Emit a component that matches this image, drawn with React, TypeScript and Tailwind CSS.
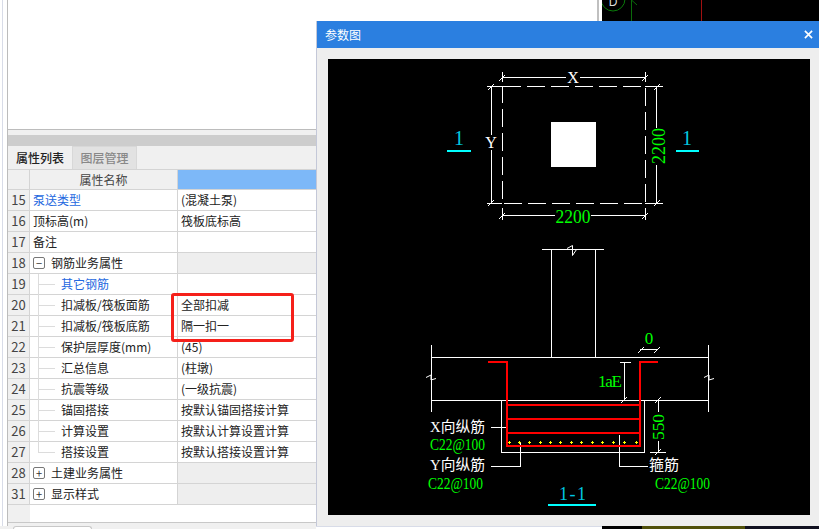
const rows = [
  { n: 15, name: "泵送类型", value: "(混凝土泵)", indent: "top", link: true },
  { n: 16, name: "顶标高(m)", value: "筏板底标高", indent: "top" },
  { n: 17, name: "备注", value: "", indent: "top" },
  { n: 18, name: "钢筋业务属性", value: "", indent: "group", open: true },
  { n: 19, name: "其它钢筋", value: "", indent: "leaf", link: true },
  { n: 20, name: "扣减板/筏板面筋", value: "全部扣减", indent: "leaf" },
  { n: 21, name: "扣减板/筏板底筋", value: "隔一扣一", indent: "leaf" },
  { n: 22, name: "保护层厚度(mm)", value: "(45)", indent: "leaf" },
  { n: 23, name: "汇总信息", value: "(柱墩)", indent: "leaf" },
  { n: 24, name: "抗震等级", value: "(一级抗震)", indent: "leaf" },
  { n: 25, name: "锚固搭接", value: "按默认锚固搭接计算", indent: "leaf" },
  { n: 26, name: "计算设置", value: "按默认计算设置计算", indent: "leaf" },
  { n: 27, name: "搭接设置", value: "按默认搭接设置计算", indent: "leaf", last: true },
  { n: 28, name: "土建业务属性", value: "", indent: "group" },
  { n: 31, name: "显示样式", value: "", indent: "group" },
];

const dots = [509, 519, 529, 540, 550, 560, 571, 581, 592, 602, 613, 624, 636];

function Tick({ x, y }: { x: number; y: number }) {
  return <path d={`M${x - 3} ${y + 3}L${x + 3} ${y - 3}`} stroke="#fff" strokeWidth="1" />;
}

function Cad() {
  const serif = { fontFamily: "'Liberation Serif', serif" };
  const cjk = { fontFamily: "'Liberation Serif', 'Noto Sans CJK SC', serif" };
  return (
    <svg viewBox="328 59 482 456" className="block h-full w-full" shapeRendering="crispEdges">
      {/* plan view */}
      <g stroke="#fff" fill="none">
        <path d="M502.5 86.5H645.5V203.5H502.5Z" strokeDasharray="18 6" />
        <path d="M502.5 72V82M645.5 72V82M502.5 77.5H566M580 77.5H645.5" />
        <path d="M487 86.5H502M487 203.5H502M491.5 86.5V135M491.5 150V203.5" />
        <path d="M645 86.5H663M645 203.5H663M656.5 86.5V128M656.5 165V203.5" />
        <path d="M502.5 208V220M645.5 208V220M502.5 215.5H555M591 215.5H645.5" />
      </g>
      <g shapeRendering="auto">
        <Tick x={502} y={78} />
        <Tick x={645} y={78} />
        <Tick x={491} y={87} />
        <Tick x={491} y={203} />
        <Tick x={657} y={87} />
        <Tick x={657} y={203} />
        <Tick x={502} y={216} />
        <Tick x={645} y={216} />
      </g>
      <rect x="551" y="122" width="45" height="45" fill="#fff" />
      <text x="573" y="83" textAnchor="middle" fontSize="16" fill="#fff" style={serif}>X</text>
      <text x="491" y="148" textAnchor="middle" fontSize="16" fill="#fff" style={serif}>Y</text>
      <text x="573" y="223" textAnchor="middle" fontSize="19" fill="#00ff00" style={serif} textLength={35} lengthAdjust="spacingAndGlyphs">2200</text>
      <text transform="translate(665 146) rotate(-90)" textAnchor="middle" fontSize="19" fill="#00ff00" style={serif} textLength={36} lengthAdjust="spacingAndGlyphs">2200</text>
      <text x="459" y="145" textAnchor="middle" fontSize="20" fill="#00c8e0" style={serif}>1</text>
      <text x="687" y="145" textAnchor="middle" fontSize="20" fill="#00c8e0" style={serif}>1</text>
      <path d="M447 150.5H471M676 150.5H699" stroke="#00ffff" strokeWidth="2" />

      {/* section view */}
      <g stroke="#fff" fill="none">
        <path d="M542 249.5H604M551.5 249.5V357M595.5 249.5V357" />
        <path d="M431.5 345V412M708.5 345V412M431.5 357.5H708.5M431.5 400.5H708.5" />
        <path d="M501.5 400.5V452.5H644.5V400.5" />
        <path d="M624.5 362V400M620 362.5H631" />
        <path d="M640 349.5H658M658.5 400V412M658.5 441V452M650 452.5H666" />
        <path d="M491 427.5H507M491 466.5H520.5V442M619.5 435V466.5H648" />
      </g>
      <g shapeRendering="auto">
        <Tick x={641} y={350} />
        <Tick x={657} y={350} />
        <Tick x={624} y={400} />
        <Tick x={658} y={400} />
        <Tick x={658} y={452} />
        <path d="M567 248.5L572.5 245.5V255.5L576.5 249.5M426 377.5L431 375V380L436 378.5M704 377.5L709 375V380L714 378.5" stroke="#fff" fill="none" />
      </g>
      <g stroke="#ff0000" strokeWidth="2" fill="none">
        <path d="M488 362H507V446H640V362H658" />
        <path d="M507 405H640M507 419H640M507 433H640" />
      </g>
      {dots.map((x) => (
        <path key={x} d={`M${x - 1.5} 442.5H${x + 1.5}M${x} 441V444`} stroke="#ffff00" />
      ))}
      <text x="649" y="344" textAnchor="middle" fontSize="17" fill="#00ff00" style={serif}>0</text>
      <text x="598" y="387" fontSize="17" fill="#00ff00" style={serif} textLength={24} lengthAdjust="spacing">1aE</text>
      <text transform="translate(664 427) rotate(-90)" textAnchor="middle" fontSize="17" fill="#00ff00" style={serif} textLength={26} lengthAdjust="spacingAndGlyphs">550</text>
      <text x="430" y="432" fontSize="15" fill="#fff" style={cjk} textLength={55} lengthAdjust="spacingAndGlyphs">X向纵筋</text>
      <text x="430" y="450" fontSize="16" fill="#00ff00" style={serif} textLength={55} lengthAdjust="spacingAndGlyphs">C22@100</text>
      <text x="430" y="470" fontSize="15" fill="#fff" style={cjk} textLength={55} lengthAdjust="spacingAndGlyphs">Y向纵筋</text>
      <text x="649" y="470" fontSize="15" fill="#fff" style={cjk}>箍筋</text>
      <text x="428" y="489" fontSize="16" fill="#00ff00" style={serif} textLength={55} lengthAdjust="spacingAndGlyphs">C22@100</text>
      <text x="655" y="489" fontSize="16" fill="#00ff00" style={serif} textLength={55} lengthAdjust="spacingAndGlyphs">C22@100</text>
      <text x="559" y="500" fontSize="18" fill="#00c8e0" style={serif} textLength={27} lengthAdjust="spacing">1-1</text>
      <path d="M548 505H596" stroke="#00ffff" strokeWidth="2" />
    </svg>
  );
}

function PropertyRow({ row }: { row: (typeof rows)[number] }) {
  const isGroup = row.indent === "group";
  return (
    <div className="flex h-[21px] border-b border-[#d4d4d4]">
      <div className="flex w-[22px] shrink-0 items-center justify-center border-r border-[#d4d4d4] bg-[#f0f0f0] text-[13px] text-[#444]">
        {row.n}
      </div>
      <div className="relative flex w-[148px] shrink-0 items-center border-r border-[#d4d4d4]">
        {row.indent === "leaf" && (
          <>
            <span className={`absolute left-[8px] top-0 w-px bg-[#dcdcdc] ${row.last ? "h-[10px]" : "h-[21px]"}`} />
            <span className="absolute left-[8px] top-[10px] h-px w-[17px] bg-[#dcdcdc]" />
          </>
        )}
        {isGroup && (
          <span className="ml-[3px] mr-[6px] flex h-[12px] w-[12px] items-center justify-center rounded-[2px] border border-[#777] text-[11px] leading-none text-[#333]">
            {row.open ? "−" : "+"}
          </span>
        )}
        <span
          className={`${row.indent === "leaf" ? "ml-[31px]" : row.indent === "top" ? "ml-[3px]" : ""} ${
            row.link ? "text-[#2468e0]" : "text-[#222]"
          }`}
        >
          {row.name}
        </span>
      </div>
      <div className={`flex flex-1 items-center pl-[3px] text-[#222] ${isGroup ? "bg-[#eeeeee]" : ""}`}>{row.value}</div>
    </div>
  );
}

export default function App() {
  return (
    <div className="relative h-[529px] w-[819px] overflow-hidden bg-white font-['Noto_Sans_CJK_SC',sans-serif] text-[12px]">
      {/* left property panel */}
      <div className="ml-[2px] flex h-[526px] w-[328px] flex-col border-l border-l-[#d8dce8] pl-[4px]">
        <div className="flex h-full flex-col border-l border-l-[#bcbcbc]">
          <div className="h-[130px] shrink-0 border-b border-[#bcbcbc] bg-white" />
          <div className="h-[5px] shrink-0 bg-[#f0f0f0]" />
          <div className="h-[11px] shrink-0 bg-[#cdcdcd]" />
          <div className="flex h-[23px] shrink-0 bg-[#f0f0f0]">
            <div className="flex w-[64px] items-center justify-center font-medium text-[#222]">属性列表</div>
            <div className="flex w-[65px] items-center justify-center border-x border-t border-[#d8d8d8] bg-[#e2e2e2] font-medium text-[#888]">
              图层管理
            </div>
          </div>
          <div className="flex h-[21px] shrink-0 border-y border-[#d4d4d4]">
            <div className="w-[22px] border-r border-[#d4d4d4] bg-[#f0f0f0]" />
            <div className="flex w-[148px] items-center justify-center border-r border-[#d4d4d4] bg-[#f0f0f0] text-[#444]">
              属性名称
            </div>
            <div className="flex-1 bg-[#7db8f8]" />
          </div>
          {rows.map((row) => (
            <PropertyRow key={row.n} row={row} />
          ))}
          <div className="flex h-[18px] shrink-0 border-b border-[#c8c8c8]">
            <div className="w-[22px] bg-[#f0f0f0]" />
            <div className="flex-1 bg-white" />
          </div>
          <div className="flex-1 bg-[#f0f0f0]" />
        </div>
      </div>

      {/* highlight drawn over the table */}
      <div className="absolute left-[171px] top-[293px] h-[49px] w-[123px] rounded-[3px] border-[3px] border-[#f5201a]" />

      {/* bottom strip */}
      <div className="absolute left-0 top-[526px] flex h-[3px] w-[819px]">
        <div className="w-[316px] bg-[#f0f0f0]">
          <div className="ml-[13px] h-[3px] w-[79px] rounded-t-[3px] border-x border-t border-[#c8c8c8] bg-white" />
        </div>
        <div className="w-[286px] border-t border-[#d8dce8] bg-white" />
        <div className="w-[40px] bg-black" />
        <div className="w-[103px] bg-[#50500a]" />
        <div className="flex-1 bg-[#101020]" />
      </div>

      {/* CAD view behind the dialog */}
      <div className="absolute left-[597px] top-0 h-[21px] w-[222px] border-l-2 border-l-[#c0c0c0] bg-white pl-[3px]">
        <svg viewBox="602 0 217 21" className="block h-[21px] w-[217px] bg-black">
          <circle cx="613" cy="-1" r="12" fill="none" stroke="#0a7a0a" />
          <text x="613" y="6" textAnchor="middle" fontSize="12" fill="#ddd" fontFamily="'Liberation Sans', sans-serif">D</text>
          <path d="M631.5 0V21M631.5 0L637 5" stroke="#0a6a0a" fill="none" />
          <path d="M701.5 0V21" stroke="#a01010" />
        </svg>
      </div>

      {/* dialog */}
      <div className="absolute left-[316px] top-[21px] flex h-[505px] w-[503px] flex-col border-l border-l-[#c4c8d8] bg-[#eeeeee]">
        <div className="flex h-[27px] shrink-0 items-center justify-between bg-[#2b7fe0] pl-[8px] pr-[6px] text-white">
          <span>参数图</span>
          <svg viewBox="0 0 10 10" className="h-[9px] w-[9px]" stroke="#fff" strokeWidth="1.8">
            <path d="M1 1L9 9M9 1L1 9" />
          </svg>
        </div>
        <div className="ml-[11px] mr-[9px] mt-[11px] h-[456px] bg-black">
          <Cad />
        </div>
      </div>
    </div>
  );
}
